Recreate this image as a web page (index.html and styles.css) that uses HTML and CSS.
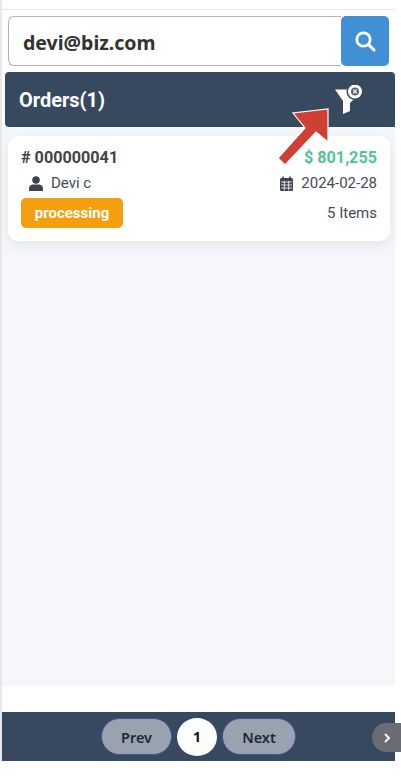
FILE: index.html
```html
<!DOCTYPE html>
<html lang="en">

<head>
  <meta charset="UTF-8">
  <meta name="viewport" content="width=device-width, initial-scale=1.0">
  <title>Orders</title>
  <link rel="stylesheet" href="styles.css">
</head>

<body>
  <div class="page">
    <div class="top-line"></div>

    <!-- Search box -->
    <div class="search">
      <div class="search-input">devi@biz.com</div>
      <button class="search-btn" aria-label="Search">
        <svg width="22" height="22" viewBox="0 0 22 22" fill="none" stroke="#fff" stroke-linecap="round">
          <circle cx="9.5" cy="9.5" r="6.7" stroke-width="2.8" />
          <path d="M14.6 14.6 L20 20" stroke-width="3" />
        </svg>
      </button>
    </div>

    <div class="orders-head">
      <span class="orders-title">Orders(1)</span>
      <svg class="filter-icon" width="30" height="30" viewBox="0 0 30 30">
        <path d="M1 4.5 H19 L21 13 L16 18 V26 L9 29 V16 Z" fill="#fff" />
        <circle cx="21" cy="6.5" r="8.5" fill="#36495f" />
        <circle cx="21" cy="6.5" r="7" fill="#fff" />
        <circle cx="21" cy="6.5" r="4" fill="#5b6675" />
        <path d="M19.2 4.7 L22.8 8.3 M22.8 4.7 L19.2 8.3" stroke="#fff" stroke-width="1.2" />
      </svg>
    </div>

    <div class="panel">
      <div class="card">
        <div class="row row-top">
          <span class="order-no"># 000000041</span>
          <span class="amount">$ 801,255</span>
        </div>
        <div class="row row-info">
          <span class="who">
            <svg width="14" height="15" viewBox="0 0 14 15" fill="#3d4450">
              <circle cx="7" cy="4" r="3.8" />
              <path d="M0 15 V12.5 C0 9.8 2 8.4 4 8.4 H10 C12 8.4 14 9.8 14 12.5 V15 Z" />
            </svg>
            Devi c
          </span>
          <span class="date">
            <svg width="13" height="15" viewBox="0 0 13 15">
              <path d="M0 3.5 Q0 2 1.5 2 H11.5 Q13 2 13 3.5 V13.5 Q13 15 11.5 15 H1.5 Q0 15 0 13.5 Z" fill="#3d4450" />
              <path d="M3 0.5 V3 M10 0.5 V3" stroke="#3d4450" stroke-width="1.6" />
              <path d="M1 6 H12 M1 9 H12 M1 12 H12 M4.3 5 V14.5 M8.7 5 V14.5" stroke="#fff" stroke-width="0.8" />
            </svg>
            2024-02-28
          </span>
        </div>
        <div class="row row-status">
          <span class="badge">processing</span>
          <span class="items">5 Items</span>
        </div>
      </div>
    </div>

    <div class="pager">
      <button class="pill">Prev</button>
      <button class="page-num">1</button>
      <button class="pill pill-next">Next</button>
    </div>
  </div>

  <!-- Annotation arrow and side handle sit over the page -->
  <svg class="arrow" width="60" height="64" viewBox="0 0 60 64">
    <path d="M4 54 L31 24 L19 9 L54 5 L54 38 L42 28 L11 61 Z" fill="#d03f33" stroke="#fff" stroke-width="1.2" />
  </svg>
  <div class="side-handle">
    <svg width="8" height="10" viewBox="0 0 8 10" fill="none" stroke="#fff" stroke-width="2">
      <path d="M2 1 L6 5 L2 9" />
    </svg>
  </div>
</body>

</html>
```

FILE: styles.css
```css
body {
  margin: 0;
  height: 779px;
  overflow: hidden;
  background: #fff;
  font-family: Roboto, "Liberation Sans", sans-serif;
  position: relative;
}

.page {
  width: 393px;
  height: 761px;
  margin-left: 2px;
  display: flex;
  flex-direction: column;
  box-shadow: -2px 0 0 #e8e8e8;
}

.top-line {
  height: 9px;
  border-bottom: 1px solid #e8e8e8;
  flex: none;
}

.search {
  display: flex;
  height: 50px;
  margin: 6px 6px 0 6px;
  flex: none;
}

.search-input {
  flex: 1;
  display: flex;
  align-items: center;
  padding: 3px 0 0 14px;
  border: 1px solid #b4b4b4;
  border-right: none;
  border-radius: 6px 0 0 6px;
  font-family: "Noto Sans", "Open Sans", sans-serif;
  font-size: 19.5px;
  font-weight: 700;
  color: #333;
}

.search-btn {
  width: 48px;
  border: none;
  padding: 0;
  border-radius: 5px;
  background: #418fd5;
  display: flex;
  align-items: center;
  justify-content: center;
}

.orders-head {
  height: 55px;
  margin: 6px 0 0 3px;
  padding: 0 31px 0 14px;
  border-radius: 4px 4px 0 4px;
  background: #36495f;
  display: flex;
  align-items: center;
  justify-content: space-between;
  flex: none;
}

.orders-title {
  color: #fff;
  font-size: 20px;
  font-weight: 700;
}

.panel {
  height: 559px;
  background: #f5f7fb;
  padding: 9px 5px 0 6px;
  box-sizing: border-box;
  flex: none;
}

.card {
  height: 105px;
  box-sizing: border-box;
  padding: 12px 13px 0 13px;
  background: #fff;
  border-radius: 10px;
  box-shadow: 0 4px 14px rgba(60, 70, 90, 0.1);
}

.row {
  display: flex;
  justify-content: space-between;
  align-items: center;
}

.row-top {
  height: 19px;
  font-size: 16.2px;
  font-weight: 700;
}

.order-no {
  color: #444;
}

.amount {
  color: #52c397;
}

.row-info {
  height: 18px;
  margin-top: 7px;
  font-size: 15px;
  color: #444b57;
}

.who {
  display: flex;
  align-items: center;
  gap: 8px;
  padding-left: 8px;
}

.date {
  display: flex;
  align-items: center;
  gap: 8px;
}

.row-status {
  margin-top: 6px;
}

.badge {
  width: 102px;
  height: 30px;
  border-radius: 5px;
  background: #f59e0f;
  color: #fff;
  font-size: 15px;
  font-weight: 700;
  display: flex;
  align-items: center;
  justify-content: center;
}

.items {
  font-size: 15px;
  color: #444b57;
}

.pager {
  height: 49px;
  margin-top: 26px;
  background: #36495f;
  display: flex;
  align-items: center;
  justify-content: center;
  gap: 5px;
  flex: none;
}

.pill {
  width: 71px;
  height: 37px;
  border: 1px solid #42549a;
  border-radius: 19px;
  background: #98a3af;
  color: #1f2937;
  font-family: "Noto Sans", "Open Sans", sans-serif;
  font-size: 14.5px;
  font-weight: 600;
  padding: 0;
}

.pill-next {
  width: 74px;
}

.page-num {
  width: 40px;
  height: 38px;
  border: none;
  border-radius: 50%;
  background: #fbfdff;
  color: #111;
  font-family: "Noto Sans", "Open Sans", sans-serif;
  font-size: 14px;
  font-weight: 700;
  padding: 0;
}

.arrow {
  position: absolute;
  left: 274px;
  top: 104px;
}

.side-handle {
  position: absolute;
  left: 372px;
  top: 723px;
  width: 29px;
  height: 29px;
  border-radius: 15px 0 0 15px;
  background: #696c73;
  display: flex;
  align-items: center;
  justify-content: center;
}
```
